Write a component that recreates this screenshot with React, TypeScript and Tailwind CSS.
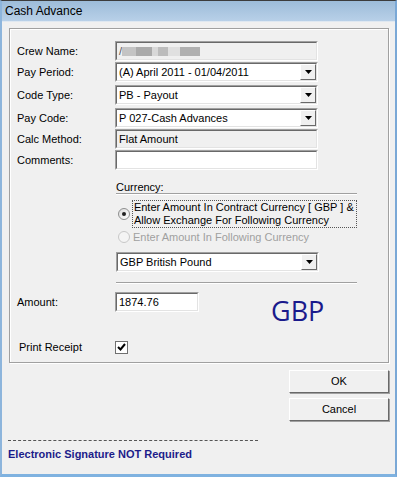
import React from 'react';

const sunken = 'border border-t-[#a0a0a0] border-l-[#a0a0a0] border-b-white border-r-white';
const sunkenInner = 'border border-t-[#696969] border-l-[#696969] border-b-[#e3e3e3] border-r-[#e3e3e3]';

const Field = ({ value, readOnly, width = 'w-[203px]', children }: { value?: string; readOnly?: boolean; width?: string; children?: React.ReactNode }) => (
  <div className={`${sunken} ${width} h-[20px]`}>
    <div className={`${sunkenInner} h-full flex items-center pl-[2px] ${readOnly ? 'bg-[#f0f0f0]' : 'bg-white'}`}>
      {children ?? <span className="leading-none">{value}</span>}
    </div>
  </div>
);

const Combo = ({ value }: { value: string }) => (
  <div className={`${sunken} w-[203px] h-[20px]`}>
    <div className={`${sunkenInner} h-full flex items-stretch bg-white`}>
      <span className="flex-1 flex items-center pl-[2px] leading-none">{value}</span>
      <div className="w-[16px] bg-[#f0f0f0] border border-t-white border-l-white border-b-[#696969] border-r-[#696969] flex items-center justify-center">
        <svg width="7" height="4" viewBox="0 0 7 4"><path d="M0 0h7L3.5 4z" fill="#000" /></svg>
      </div>
    </div>
  </div>
);

const Row = ({ label, className, children }: { label: string; className?: string; children: React.ReactNode }) => (
  <div className={`flex items-center ${className ?? ''}`}>
    <div className="w-[105px] pl-[7px]">{label}</div>
    {children}
  </div>
);

const Btn = ({ label }: { label: string }) => (
  <div className="w-[100px] h-[23px] border border-t-white border-l-white border-b-[#696969] border-r-[#696969] bg-[#f0f0f0] shadow-[1px_1px_0_#a0a0a0] flex items-center justify-center">
    {label}
  </div>
);

export default function App() {
  return (
    <div
      className="w-[397px] h-[477px] bg-[#f0f0f0] text-[11px] text-black flex flex-col border-t border-t-[#3c3c3c] border-l-[2px] border-l-[#8db5dc] border-r-[2px] border-r-[#7aa8d6] border-b-[3px] border-b-[#7fb2e0]"
      style={{ fontFamily: '"Liberation Sans", Arial, sans-serif' }}
    >
      <div className="h-[21px] bg-gradient-to-b from-[#9dbcd9] to-[#b8d0e8] flex items-center pl-[3px] text-[12px] border-b border-b-[#dfe8f1]">
        Cash Advance
      </div>

      <div className="ml-[7px] mt-[6px] w-[380px] h-[335px] border border-[#a0a0a0] shadow-[inset_1px_1px_0_#fff,1px_1px_0_#fff] flex flex-col">
        <Row label="Crew Name:" className="mt-[12px]">
          <Field readOnly>
            <div className="flex items-center h-[10px]">
              <span className="text-[#555] leading-none">/</span>
              <div className="w-[14px] h-[9px] bg-[#c4c4c4]" />
              <div className="w-[16px] h-[9px] bg-[#aaaaaa]" />
              <div className="w-[6px] h-[9px] bg-[#d8d8d8]" />
              <div className="w-[10px] h-[9px] bg-[#bcbcbc]" />
              <div className="w-[12px] h-[9px] bg-[#e0e0e0]" />
              <div className="w-[20px] h-[9px] bg-[#b0b0b0]" />
            </div>
          </Field>
        </Row>
        <Row label="Pay Period:" className="mt-[1px]">
          <Combo value="(A) April 2011 - 01/04/2011" />
        </Row>
        <Row label="Code Type:" className="mt-[3px]">
          <Combo value="PB - Payout" />
        </Row>
        <Row label="Pay Code:" className="mt-[3px]">
          <Combo value="P 027-Cash Advances" />
        </Row>
        <Row label="Calc Method:" className="mt-[1px]">
          <Field readOnly value="Flat Amount" />
        </Row>
        <Row label="Comments:" className="mt-[1px]">
          <Field />
        </Row>

        <div className="ml-[106px] mt-[12px] w-[241px]">
          <div className="leading-none">Currency:</div>
          <div className="h-[2px] border-t border-t-[#a0a0a0] border-b border-b-white" />
          <div className="flex items-center mt-[5px] ml-[2px]">
            <div className="w-[12px] h-[12px] rounded-full border border-[#8e8f8f] bg-gradient-to-br from-[#dcdcdc] to-white flex items-center justify-center">
              <div className="w-[4px] h-[4px] rounded-full bg-[#222]" />
            </div>
            <div className="ml-[2px] w-[228px] border border-dotted border-[#555] leading-[13px] px-[1px]">
              Enter Amount In Contract Currency [ GBP ] &amp;
              <br />
              Allow Exchange For Following Currency
            </div>
          </div>
          <div className="flex items-center mt-[3px] ml-[2px] text-[#a0a0a0]">
            <div className="w-[12px] h-[12px] rounded-full border border-[#c8c8c8] bg-[#f4f4f4]" />
            <div className="ml-[3px] leading-none">Enter Amount In Following Currency</div>
          </div>
          <div className="mt-[9px]">
            <Combo value="GBP British Pound" />
          </div>
          <div className="mt-[10px] h-[2px] border-t border-t-[#a0a0a0] border-b border-b-white" />
        </div>

        <div className="flex items-start mt-[8px] h-[20px]">
          <div className="w-[105px] pl-[7px] self-center">Amount:</div>
          <Field width="w-[84px]" value="1874.76" />
          <div className="ml-[72px] mt-[5px] text-[27px] leading-none text-[#1a1a8c]" style={{ fontFamily: '"Open Sans", "Liberation Sans", sans-serif' }}>GBP</div>
        </div>

        <div className="flex items-center mt-[27px]">
          <div className="w-[105px] pl-[9px]">Print Receipt</div>
          <div className="w-[13px] h-[13px] border border-[#707070] bg-white flex items-center justify-center">
            <svg width="9" height="8" viewBox="0 0 9 8"><path d="M1 4l2.5 2.5L8 1" stroke="#000" strokeWidth="2" fill="none" /></svg>
          </div>
        </div>
      </div>

      <div className="flex flex-col items-end pr-[6px] mt-[7px] gap-[5px]">
        <Btn label="OK" />
        <Btn label="Cancel" />
      </div>

      <div className="ml-[6px] mt-[19px] w-[250px] border-t border-dashed border-t-[#555]" />
      <div className="ml-[6px] mt-[8px] font-bold text-[#1c1c8a] leading-none">Electronic Signature NOT Required</div>
    </div>
  );
}
